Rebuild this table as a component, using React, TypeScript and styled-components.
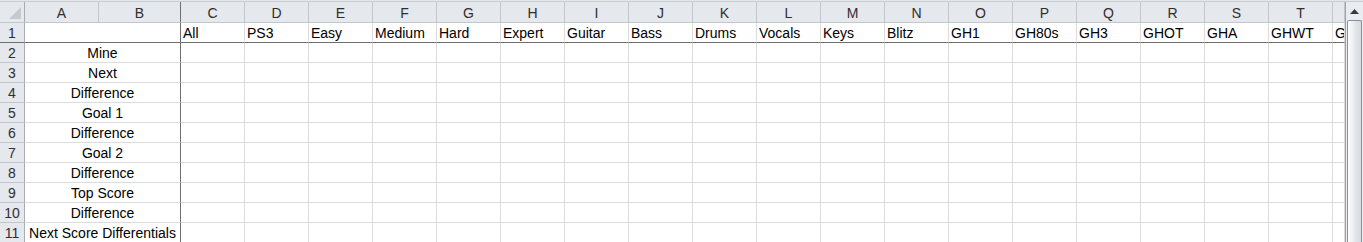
import React from "react";
import styled, { createGlobalStyle, css } from "styled-components";

const GlobalStyle = createGlobalStyle`
  html, body {
    margin: 0;
    padding: 0;
    background: #ffffff;
    overflow: hidden;
  }
  body {
    font-family: "Liberation Sans", Arial, sans-serif;
  }
`;

const COLUMNS = [
  "C", "D", "E", "F", "G", "H", "I", "J", "K", "L",
  "M", "N", "O", "P", "Q", "R", "S", "T",
];

const HEADINGS = [
  "All", "PS3", "Easy", "Medium", "Hard", "Expert", "Guitar", "Bass", "Drums",
  "Vocals", "Keys", "Blitz", "GH1", "GH80s", "GH3", "GHOT", "GHA", "GHWT",
];

const LABELS = [
  "Mine",
  "Next",
  "Difference",
  "Goal 1",
  "Difference",
  "Goal 2",
  "Difference",
  "Top Score",
  "Difference",
  "Next Score Differentials",
];

const GRID = "#dadcdd";
const HEAD_LINE = "#c3c7cc";
const FREEZE = "#6f6f6f";

const Window = styled.div`
  width: 1363px;
  height: 242px;
  overflow: hidden;
  background: #fff;
`;

const TopEdge = styled.div`
  height: 1px;
  background: #e3e6ea;
  border-bottom: 1px solid #c9cdd2;
`;

const Body = styled.div`
  display: flex;
`;

const Sheet = styled.div`
  display: grid;
  grid-template-columns: 25px 74px 82px repeat(18, 64px) 12px;
  grid-template-rows: 21px repeat(11, 20px);
  width: 1345px;
  font-size: 14px;
  color: #000;
`;

const Cell = styled.div<{ $freezeRight?: boolean; $freezeBottom?: boolean; $span?: number }>`
  box-sizing: border-box;
  border-right: 1px solid ${GRID};
  border-bottom: 1px solid ${GRID};
  overflow: hidden;
  white-space: nowrap;
  padding: 2px 2px 0;
  line-height: 17px;
  ${(p) => p.$span && css`grid-column: span ${p.$span};`}
  ${(p) => p.$freezeRight && css`border-right-color: ${FREEZE};`}
  ${(p) => p.$freezeBottom && css`border-bottom-color: ${FREEZE};`}
`;

const LabelCell = styled(Cell)`
  text-align: center;
  padding-left: 0;
  padding-right: 0;
`;

const Heading = styled.div<{ $freezeRight?: boolean; $freezeBottom?: boolean }>`
  box-sizing: border-box;
  background: #e5e8ec;
  border-right: 1px solid ${HEAD_LINE};
  border-bottom: 1px solid ${HEAD_LINE};
  color: #2f2f2f;
  text-align: center;
  overflow: hidden;
  white-space: nowrap;
  padding-top: 2px;
  line-height: 18px;
  ${(p) => p.$freezeRight && css`border-right-color: ${FREEZE};`}
  ${(p) => p.$freezeBottom && css`border-bottom-color: ${FREEZE};`}
`;

const RowNumber = styled(Heading)`
  line-height: 17px;
  border-right-color: #a9adb3;
`;

const Corner = styled(Heading)`
  position: relative;
  border-right-color: #a9adb3;
`;

const CornerMark = styled.svg`
  position: absolute;
  right: 3px;
  bottom: 3px;
`;

const Scrollbar = styled.div`
  width: 18px;
  box-sizing: border-box;
  border-left: 1px solid #9ea3a9;
  background: #e9ecf0;
  display: flex;
  flex-direction: column;
  height: 240px;
`;

const ArrowButton = styled.div`
  height: 18px;
  display: flex;
  align-items: center;
  justify-content: center;
`;

const Thumb = styled.div`
  flex: 1;
  margin: 0 1px;
  border: 1px solid #8d9197;
  border-bottom: none;
  border-radius: 2px 2px 0 0;
  background: linear-gradient(to right, #ffffff, #e1e5ea 60%, #d6dbe1);
`;

export default function App() {
  return (
    <>
      <GlobalStyle />
      <Window>
        <TopEdge />
        <Body>
          <Sheet>
            <Corner>
              <CornerMark width="12" height="12" viewBox="0 0 12 12">
                <polygon points="12,0 12,12 0,12" fill="#c6cad0" />
              </CornerMark>
            </Corner>
            <Heading>A</Heading>
            <Heading $freezeRight>B</Heading>
            {COLUMNS.map((c) => (
              <Heading key={c}>{c}</Heading>
            ))}
            <Heading />

            <RowNumber $freezeBottom>1</RowNumber>
            <Cell $span={2} $freezeRight $freezeBottom />
            {HEADINGS.map((h, i) => (
              <Cell key={i} $freezeBottom>
                {h}
              </Cell>
            ))}
            <Cell $freezeBottom>G</Cell>

            {LABELS.map((label, r) => (
              <React.Fragment key={r}>
                <RowNumber>{r + 2}</RowNumber>
                <LabelCell $span={2} $freezeRight>
                  {label}
                </LabelCell>
                {COLUMNS.map((c) => (
                  <Cell key={c} />
                ))}
                <Cell />
              </React.Fragment>
            ))}
          </Sheet>
          <Scrollbar>
            <ArrowButton>
              <svg width="9" height="5" viewBox="0 0 9 5">
                <polygon points="4.5,0 9,5 0,5" fill="#3a3a3a" />
              </svg>
            </ArrowButton>
            <Thumb />
          </Scrollbar>
        </Body>
      </Window>
    </>
  );
}
